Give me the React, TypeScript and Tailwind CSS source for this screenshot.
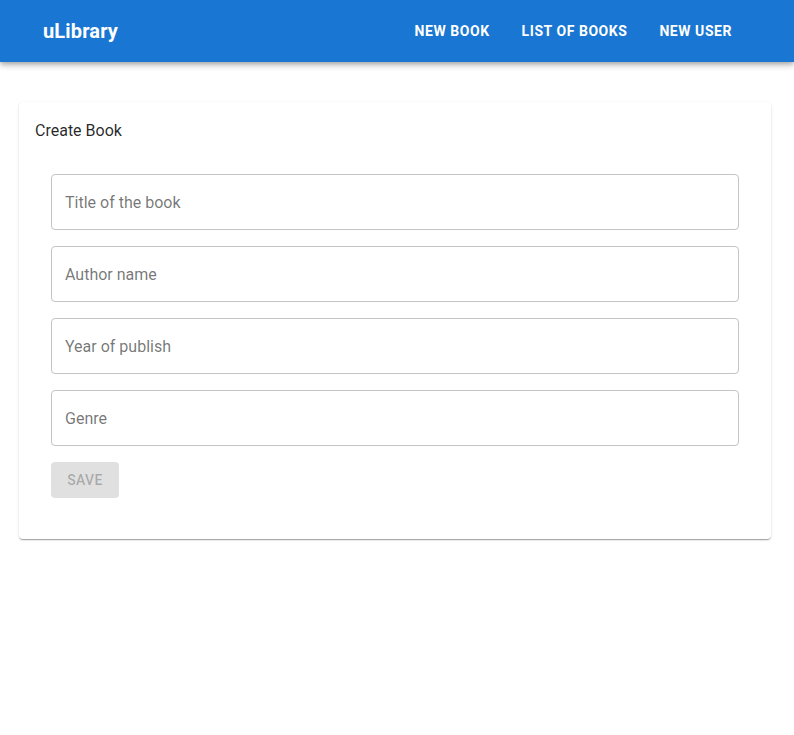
import React from 'react';

const fields = ['Title of the book', 'Author name', 'Year of publish', 'Genre'];

export default function App() {
  return (
    <div className="min-h-[735px] bg-white font-['Roboto',sans-serif]">
      {/* App bar */}
      <header className="h-[62px] bg-[#1976d2] text-white flex items-center px-[43px] shadow-[0_2px_4px_-1px_rgba(0,0,0,0.2),0_4px_5px_0_rgba(0,0,0,0.14),0_1px_10px_0_rgba(0,0,0,0.12)]">
        <h1 className="text-[20px] font-bold tracking-[0.15px] flex-1">uLibrary</h1>
        <nav className="flex gap-8 mr-[19px]">
          <a className="text-[14px] font-bold uppercase tracking-[0.55px]">New Book</a>
          <a className="text-[14px] font-bold uppercase tracking-[0.55px]">List of Books</a>
          <a className="text-[14px] font-bold uppercase tracking-[0.55px]">New User</a>
        </nav>
      </header>

      {/* Card */}
      <div className="pl-[19px] pr-[23px] pt-[40px]">
        <div className="rounded bg-white p-4 pb-[41px] shadow-[0_2px_1px_-1px_rgba(0,0,0,0.2),0_1px_1px_0_rgba(0,0,0,0.14),0_1px_3px_0_rgba(0,0,0,0.12)]">
          <h2 className="text-[16px] leading-6 text-[rgba(0,0,0,0.85)] pt-[1px]">Create Book</h2>
          <form className="px-4 pt-[31px] flex flex-col gap-4">
            {fields.map((f) => (
              <input
                key={f}
                type="text"
                placeholder={f}
                className="h-14 w-full rounded border border-[#c4c4c4] px-[13px] text-[16px] text-[rgba(0,0,0,0.87)] placeholder:text-[rgba(0,0,0,0.55)] outline-none"
              />
            ))}
            <div>
              <button
                type="submit"
                disabled
                className="h-9 w-[68px] rounded bg-[#e0e0e0] text-[14px] font-medium uppercase tracking-[0.4px] text-[rgba(0,0,0,0.26)]"
              >
                Save
              </button>
            </div>
          </form>
        </div>
      </div>
    </div>
  );
}
